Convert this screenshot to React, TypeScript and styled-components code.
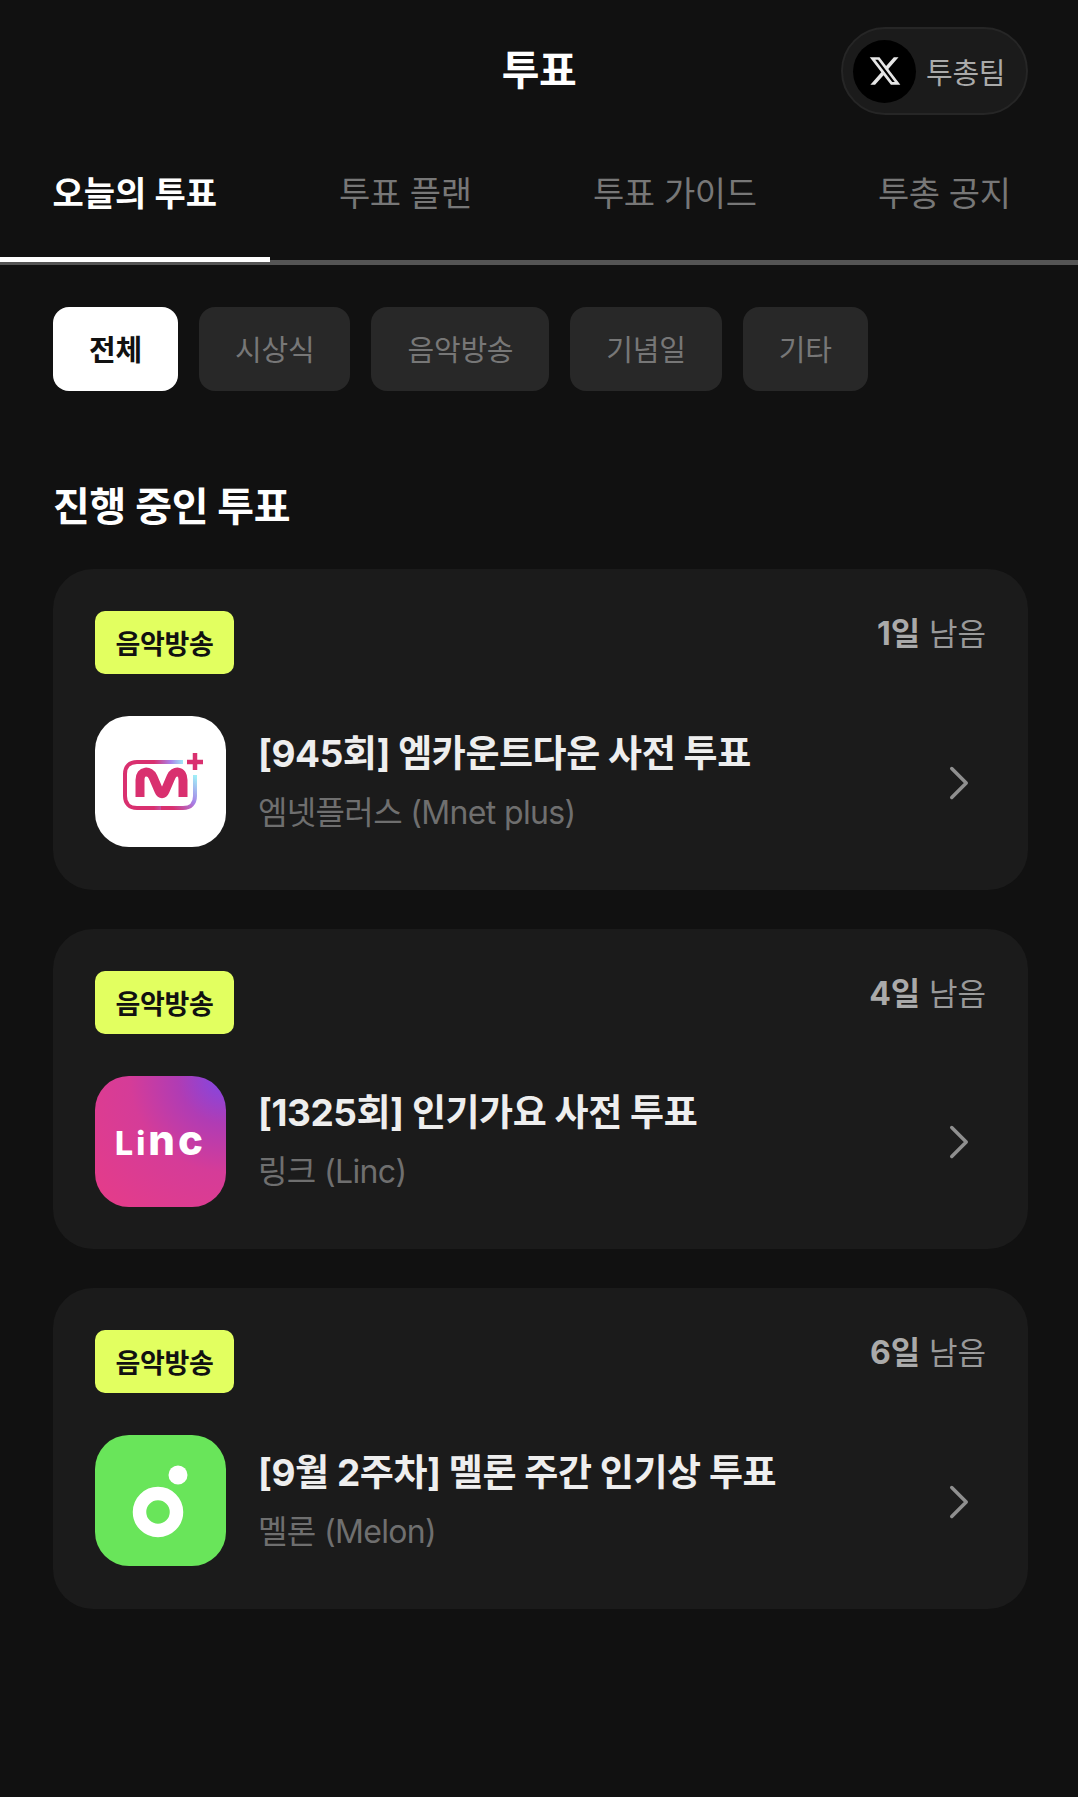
import React from "react";
import styled, { createGlobalStyle } from "styled-components";
import { FaXTwitter } from "react-icons/fa6";
import { ChevronRight } from "lucide-react";

const GlobalStyle = createGlobalStyle`
  html, body {
    margin: 0;
    padding: 0;
    background: #111111;
  }
  * { box-sizing: border-box; }
  body {
    font-family: Inter, "Noto Sans CJK KR", sans-serif;
  }
`;

const Page = styled.div`
  width: 1078px;
  min-height: 1797px;
  background: #111111;
  color: #fff;
`;

const Header = styled.header`
  position: relative;
  height: 142px;
  display: flex;
  align-items: center;
  justify-content: center;
`;

const Title = styled.h1`
  margin: -2px 0 0;
  font-size: 41px;
  font-weight: 700;
  line-height: 1;
  letter-spacing: -0.5px;
`;

const TeamPill = styled.div`
  position: absolute;
  left: 841px;
  top: 27px;
  width: 187px;
  height: 88px;
  border-radius: 44px;
  background: #1b1b1b;
  border: 2px solid #262626;
  display: flex;
  align-items: center;
  padding-left: 10px;
  gap: 10px;
`;

const XCircle = styled.div`
  width: 63px;
  height: 63px;
  border-radius: 50%;
  background: #000;
  color: #e6e6e6;
  display: flex;
  align-items: center;
  justify-content: center;
  font-size: 34px;
`;

const PillLabel = styled.span`
  font-size: 29px;
  letter-spacing: -0.3px;
  color: #aaaaaa;
`;

const Tabs = styled.nav`
  display: grid;
  grid-template-columns: repeat(4, 1fr);
  height: 123px;
  border-bottom: 5px solid #555555;
`;

const Tab = styled.div<{ $active?: boolean }>`
  position: relative;
  display: flex;
  justify-content: center;
  padding-top: 27px;
  padding-left: ${(p) => (p.$active ? 0 : 2)}px;
  font-size: 34px;
  line-height: 50px;
  letter-spacing: ${(p) => (p.$active ? 0 : -0.4)}px;
  font-weight: ${(p) => (p.$active ? 700 : 400)};
  color: ${(p) => (p.$active ? "#fff" : "#777777")};

  ${(p) =>
    p.$active &&
    `&::after {
      content: "";
      position: absolute;
      left: 0;
      right: 0;
      bottom: -2px;
      height: 5px;
      background: #fff;
    }`}
`;

const Chips = styled.div`
  display: flex;
  gap: 21px;
  padding: 42px 53px 0;
`;

const Chip = styled.div<{ $active?: boolean }>`
  height: 84px;
  padding: 0 36px 2px;
  border-radius: 16px;
  display: flex;
  align-items: center;
  font-size: 29px;
  letter-spacing: -0.2px;
  font-weight: ${(p) => (p.$active ? 700 : 400)};
  background: ${(p) => (p.$active ? "#fff" : "#282828")};
  color: ${(p) => (p.$active ? "#111" : "#777777")};
`;

const SectionTitle = styled.h2`
  margin: 86px 53px 32px;
  font-size: 40px;
  line-height: 60px;
  letter-spacing: -0.3px;
  font-weight: 700;
  color: #fff;
`;

const CardList = styled.div`
  display: flex;
  flex-direction: column;
  gap: 39px;
  padding: 0 50px 0 53px;
`;

const Card = styled.article`
  height: 320.5px;
  border-radius: 40px;
  background: #1b1b1b;
  padding: 42px;
`;

const CardTop = styled.div`
  display: flex;
  justify-content: space-between;
  align-items: flex-start;
`;

const Badge = styled.span`
  width: 139px;
  height: 63px;
  border-radius: 10px;
  background: #e2ff60;
  color: #111;
  display: flex;
  align-items: center;
  justify-content: center;
  font-size: 27px;
  letter-spacing: -0.4px;
  font-weight: 700;
`;

const Remaining = styled.div`
  font-size: 31px;
  line-height: 46px;
  color: #999999;

  b {
    font-size: 32px;
    font-weight: 700;
    color: #aaaaaa;
  }
`;

const CardBody = styled.div`
  display: flex;
  align-items: center;
  margin-top: 42px;
`;

const AppIcon = styled.div<{ $bg: string }>`
  width: 131px;
  height: 131px;
  flex: none;
  border-radius: 34px;
  background: ${(p) => p.$bg};
  display: flex;
  align-items: center;
  justify-content: center;
  overflow: hidden;
`;

const LincWord = styled.span`
  margin-top: -2px;
  font-family: Inter, sans-serif;
  font-weight: 800;
  letter-spacing: 3px;
  line-height: 1;
  color: #fff;
`;

const LincPart = styled.span<{ $size: number }>`
  font-size: ${(p) => p.$size}px;
`;

const CardText = styled.div`
  flex: 1;
  margin-left: 32px;
  display: flex;
  flex-direction: column;
  gap: 10px;
`;

const CardTitle = styled.div`
  font-size: 37px;
  line-height: 52px;
  letter-spacing: -0.45px;
  font-weight: 700;
  color: #eeeeee;
`;

const CardSub = styled.div`
  font-size: 32px;
  line-height: 46px;
  letter-spacing: -0.65px;
  color: #6f6f6f;
`;

const Arrow = styled(ChevronRight)`
  flex: none;
  margin: 2px -2px 0 0;
  color: #8f8f8f;
`;

function MnetLogo() {
  return (
    <svg width="131" height="131" viewBox="0 0 131 131" fill="none">
      <defs>
        <linearGradient id="mnetTop" gradientUnits="userSpaceOnUse" x1="30" y1="0" x2="88" y2="0">
          <stop offset="0.5" stopColor="#d9306f" />
          <stop offset="0.78" stopColor="#a97fe8" />
          <stop offset="1" stopColor="#9fe9f7" />
        </linearGradient>
        <linearGradient id="mnetSide" gradientUnits="userSpaceOnUse" x1="66" y1="94" x2="100" y2="60">
          <stop offset="0.2" stopColor="#d9306f" />
          <stop offset="0.58" stopColor="#a77ee6" />
          <stop offset="1" stopColor="#9feef7" />
        </linearGradient>
      </defs>
      <path d="M88 46H42C34.5 46 30 50.5 30 58V80C30 87.5 34.5 92 42 92H66" stroke="url(#mnetTop)" strokeWidth="4" />
      <path d="M100 59V80C100 87.5 95.5 92 88 92H66" stroke="url(#mnetSide)" strokeWidth="4" />
      <path
        d="M45 81V64C45 54 55 54 58 61L64 75C65.5 78.5 68.5 78.5 70 75L76 61C79 54 88 54 88 64V81"
        stroke="#d9306f"
        strokeWidth="9"
        strokeLinejoin="round"
      />
      <path d="M100 37V54M92 46H108" stroke="#d9306f" strokeWidth="4.5" />
    </svg>
  );
}

function MelonLogo() {
  return (
    <svg width="131" height="131" viewBox="0 0 131 131">
      <circle cx="63" cy="77" r="18.5" fill="none" stroke="#fff" strokeWidth="13.5" />
      <circle cx="83" cy="40" r="9.5" fill="#fff" />
    </svg>
  );
}

const categories = ["전체", "시상식", "음악방송", "기념일", "기타"];

const votes = [
  {
    days: "1일",
    title: "[945회] 엠카운트다운 사전 투표",
    sub: "엠넷플러스 (Mnet plus)",
    bg: "#ffffff",
    logo: <MnetLogo />,
  },
  {
    days: "4일",
    title: "[1325회] 인기가요 사전 투표",
    sub: "링크 (Linc)",
    bg: "radial-gradient(circle at 100% 0%, #7c48e8 0%, #b03cb4 26%, #d53c98 52%, #e63c88 100%)",
    logo: (
      <LincWord>
        <LincPart $size={32}>Li</LincPart>
        <LincPart $size={42}>nc</LincPart>
      </LincWord>
    ),
  },
  {
    days: "6일",
    title: "[9월 2주차] 멜론 주간 인기상 투표",
    sub: "멜론 (Melon)",
    bg: "#69e55a",
    logo: <MelonLogo />,
  },
];

export default function App() {
  return (
    <Page>
      <GlobalStyle />
      <Header>
        <Title>투표</Title>
        <TeamPill>
          <XCircle>
            <FaXTwitter />
          </XCircle>
          <PillLabel>투총팀</PillLabel>
        </TeamPill>
      </Header>
      <Tabs>
        <Tab $active>오늘의 투표</Tab>
        <Tab>투표 플랜</Tab>
        <Tab>투표 가이드</Tab>
        <Tab>투총 공지</Tab>
      </Tabs>
      <Chips>
        {categories.map((c, i) => (
          <Chip key={c} $active={i === 0}>
            {c}
          </Chip>
        ))}
      </Chips>
      <SectionTitle>진행 중인 투표</SectionTitle>
      <CardList>
        {votes.map((v) => (
          <Card key={v.title}>
            <CardTop>
              <Badge>음악방송</Badge>
              <Remaining>
                <b>{v.days}</b> 남음
              </Remaining>
            </CardTop>
            <CardBody>
              <AppIcon $bg={v.bg}>{v.logo}</AppIcon>
              <CardText>
                <CardTitle>{v.title}</CardTitle>
                <CardSub>{v.sub}</CardSub>
              </CardText>
              <Arrow size={58} strokeWidth={1.45} />
            </CardBody>
          </Card>
        ))}
      </CardList>
    </Page>
  );
}
